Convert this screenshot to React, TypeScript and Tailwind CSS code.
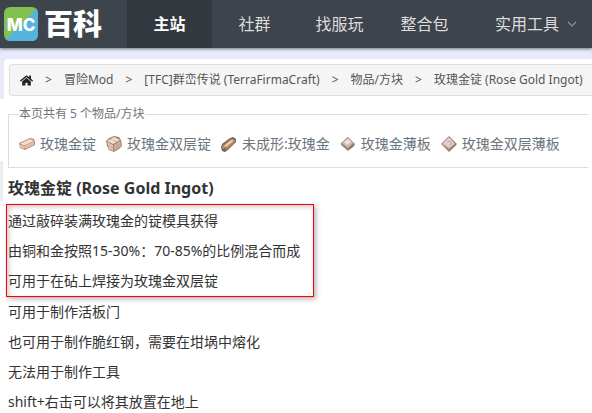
import { FaHome } from 'react-icons/fa';

const navItems = ['主站', '社群', '找服玩', '整合包'];

const crumbs = ['冒险Mod', '[TFC]群峦传说 (TerraFirmaCraft)', '物品/方块', '玫瑰金锭 (Rose Gold Ingot)'];

const highlighted = [
  '通过敲碎装满玫瑰金的锭模具获得',
  '由铜和金按照15-30%：70-85%的比例混合而成',
  '可用于在砧上焊接为玫瑰金双层锭'
];

const notes = ['可用于制作活板门', '也可用于制作脆红钢，需要在坩埚中熔化', '无法用于制作工具', 'shift+右击可以将其放置在地上'];

function Logo() {
  return (
    <svg viewBox="0 0 104 48" className="h-12 w-26" role="img" aria-label="MC百科">
      <defs>
        <clipPath id="badge">
          <rect x="4" y="7" width="34" height="34" rx="6" />
        </clipPath>
      </defs>
      <g clipPath="url(#badge)">
        <rect x="4" y="7" width="34" height="34" fill="#83c052" />
        <path d="M38 7v34H4z" fill="#55b4da" />
      </g>
      <text x="21" y="31" textAnchor="middle" fontFamily="Inter, sans-serif" fontSize="17" fontWeight="800" fill="#fff">MC</text>
      <text x="44" y="35" fontFamily="'Noto Sans CJK SC', sans-serif" fontSize="29" fontWeight="900" fill="#fff">百科</text>
    </svg>
  );
}

function ChevronDown() {
  return (
    <svg viewBox="0 0 10 7" fill="none" stroke="#8d9297" strokeWidth="1.2" className="h-[7px] w-[10px]">
      <path d="m1 1 4 4 4-4" />
    </svg>
  );
}

function IngotIcon() {
  return (
    <svg viewBox="0 0 16 16" className="size-4">
      <path d="M0 7 11 2l4 1 1 3v3L6 14l-5-2z" fill="#b08c7a" />
      <path d="M1 7.500 11 3l4 2L5 9.500z" fill="#f5dccd" />
      <path d="M1 8.500l4 2v2.500l-4-2z" fill="#ecc6b2" />
      <path d="M5 10l10-4.500v3L6 13z" fill="#e3c0ad" />
    </svg>
  );
}

function DoubleIngotIcon() {
  return (
    <svg viewBox="0 0 16 16" className="size-4">
      <path d="M0 5 3 2l5-2 5 1 2 3 1 6-3 3-5 3-5-2-2-4z" fill="#a5836f" />
      <path d="M1 5 8 1l6 3-7 4z" fill="#f3dccd" />
      <path d="M1 6l6 3v6l-4-2z" fill="#e5c3af" />
      <path d="M8 9l6-4 1 5-7 5z" fill="#d2af9c" />
      <path d="M4 3l7 3M2 9l5 3M8 12l6-4M11 7v6" stroke="#b99887" strokeWidth=".5" />
    </svg>
  );
}

function UnshapedIcon() {
  return (
    <svg viewBox="0 0 16 16" className="size-4">
      <path d="M0 11 1 8l8-6 3-1 3 2v3l-8 8-3 2-3-1z" fill="#776555" />
      <path d="M1 10 10 3l3 0-9 9-2 1z" fill="#a8927e" />
      <path d="M3 10 10 4l3 0v1l-7 6H4z" fill="#efb57d" />
      <path d="M5 9.500 10.500 5" stroke="#ffe4bd" />
      <path d="M4 13l10-9v2l-8 8z" fill="#a48b74" />
    </svg>
  );
}

function SheetIcon() {
  return (
    <svg viewBox="0 0 16 16" className="size-4">
      <path d="M1 7 8 1l7 7-1 2-6 5-7-6z" fill="#9c8880" />
      <path d="M2 7 8 2l5 5-5 5z" fill="#cfbbb1" />
      <path d="M4 6 8 3l3 3-4 3z" fill="#efe1d9" />
      <path d="M8 13l6-5v2l-6 4z" fill="#85716a" />
    </svg>
  );
}

function DoubleSheetIcon() {
  return (
    <svg viewBox="0 0 16 16" className="size-4">
      <path d="M0 8 8 0l8 8-8 8z" fill="#9b857b" />
      <path d="M1 8 8 1l6 7-6 5z" fill="#cfbbb0" />
      <path d="M3 7 8 2l5 5-5 4z" fill="#e6d6cc" />
      <path d="M6 7l2-2 3 2-3 2" fill="none" stroke="#bfa89d" />
      <path d="M8 14l7-6v1l-7 6z" fill="#806b63" />
    </svg>
  );
}

const items = [
  { name: '玫瑰金锭', Icon: IngotIcon },
  { name: '玫瑰金双层锭', Icon: DoubleIngotIcon },
  { name: '未成形:玫瑰金', Icon: UnshapedIcon },
  { name: '玫瑰金薄板', Icon: SheetIcon },
  { name: '玫瑰金双层薄板', Icon: DoubleSheetIcon }
];

export default function App() {
  return (
    <div className="min-h-screen overflow-x-hidden bg-white font-['Noto_Sans','Noto_Sans_CJK_SC',sans-serif] text-[#333]">
      <header className="relative flex h-12 bg-[#3d444c] shadow-[0_1px_3px_rgba(0,0,0,0.5)]">
        <a href="#" className="w-[127px] shrink-0"><Logo /></a>
        <nav className="flex whitespace-nowrap text-base text-[#ddd]">
          {navItems.map((item, i) => (
            <a
              key={item}
              href="#"
              className={i === 0 ? 'flex w-[85px] items-center justify-center bg-[#32383e] font-bold text-white' : 'flex w-[85px] items-center justify-center'}
            >
              {item}
            </a>
          ))}
          <button className="flex items-center gap-2 pl-7">
            实用工具
            <ChevronDown />
          </button>
        </nav>
      </header>

      <div className="bg-[#e6eafb] pt-[11px] pl-1">
        <div className="rounded-tl bg-white pt-[5px] pb-[3px] pl-[5px]">
          <nav className="flex h-8 items-center gap-3 rounded-l border border-r-0 border-[#ddd] bg-[#f5f5f5] pl-[10px] text-xs whitespace-nowrap text-[#555]">
            <a href="#" aria-label="首页"><FaHome className="size-[13px] text-[#222]" /></a>
            {crumbs.map((crumb) => (
              <span key={crumb} className="flex gap-3">
                <span>&gt;</span>
                <a href="#">{crumb}</a>
              </span>
            ))}
          </nav>
        </div>
      </div>

      <div className="flex">
        <aside className="mt-[62px] h-10 w-[3px] shrink-0 bg-[#eee]" />
        <main className="min-w-0 flex-1 pt-[5px] pl-[5px]">
          <fieldset className="mr-1 h-16 border border-r-0 border-[#ddd] pl-[10px] text-[#6c757d]">
            <legend className="text-xs leading-5">本页共有 5 个物品/方块</legend>
            <ul className="mt-2 flex gap-[10px] text-sm leading-6 whitespace-nowrap">
              {items.map(({ name, Icon }) => (
                <li key={name}>
                  <a href="#" className="flex items-center gap-[5px]"><Icon />{name}</a>
                </li>
              ))}
            </ul>
          </fieldset>

          <h1 className="mt-1 text-base leading-8 font-bold">玫瑰金锭 (Rose Gold Ingot)</h1>

          <div className="text-sm leading-[30px]">
            <div className="-ml-[2px] w-[308px] border border-[#f00] pt-px pl-px whitespace-nowrap shadow-[2px_2px_5px_rgba(0,0,0,0.3),inset_2px_2px_5px_rgba(0,0,0,0.2)]">
              {highlighted.map((line) => <p key={line}>{line}</p>)}
            </div>
            {notes.map((line) => <p key={line}>{line}</p>)}
          </div>
        </main>
      </div>
    </div>
  );
}
